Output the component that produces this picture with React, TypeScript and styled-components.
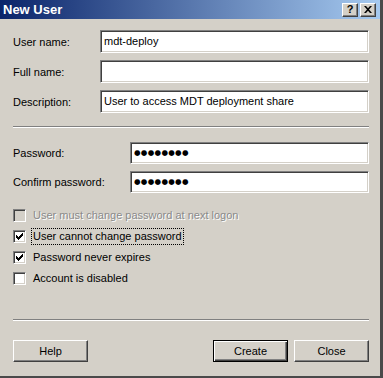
import React from 'react';
import styled, { createGlobalStyle, css } from 'styled-components';

const GlobalStyle = createGlobalStyle`
  html, body {
    margin: 0;
    padding: 0;
    background: #d4d0c8;
  }
  * {
    box-sizing: border-box;
  }
`;

const sunken = css`
  border: 1px solid;
  border-color: #808080 #ffffff #ffffff #808080;
  box-shadow: inset 1px 1px 0 #404040, inset -1px -1px 0 #d4d0c8;
`;

const raised = css`
  border: 1px solid;
  border-color: #ffffff #404040 #404040 #ffffff;
  box-shadow: inset -1px -1px 0 #808080;
`;

const Window = styled.div`
  width: 383px;
  height: 378px;
  background: #d4d0c8;
  border-right: 3px solid #4a4a4a;
  border-bottom: 2px solid #4a4a4a;
  display: flex;
  flex-direction: column;
  font-family: 'Liberation Sans', Arial, sans-serif;
  font-size: 11px;
  color: #000;
`;

const TitleBar = styled.div`
  height: 19px;
  flex: none;
  display: flex;
  align-items: center;
  padding: 0 4px 0 3px;
  background: linear-gradient(to right, #0a246a, #a6caf0);
`;

const Title = styled.div`
  flex: 1;
  color: #fff;
  font-weight: bold;
  font-size: 13px;
`;

const TitleButton = styled.div`
  ${raised};
  width: 16px;
  height: 14px;
  margin-left: 2px;
  background: #d4d0c8;
  display: flex;
  align-items: center;
  justify-content: center;
  font-weight: bold;
  font-size: 11px;
  line-height: 1;
`;

const Body = styled.div`
  flex: 1;
  display: flex;
  flex-direction: column;
  padding: 11px 11px 0 13px;
`;

const FieldRow = styled.div<{ $height: number; $gap: number }>`
  display: flex;
  align-items: center;
  height: ${(p) => p.$height}px;
  margin-bottom: ${(p) => p.$gap}px;
`;

const Label = styled.label<{ $width: number }>`
  width: ${(p) => p.$width}px;
  flex: none;
`;

const TextBox = styled.input<{ $dots?: boolean }>`
  ${sunken};
  flex: 1;
  height: 100%;
  background: #fff;
  padding: 0 0 2px 3px;
  font-family: ${(p) => (p.$dots ? "'DejaVu Sans', sans-serif" : "'Liberation Sans', Arial, sans-serif")};
  font-size: ${(p) => (p.$dots ? '7.5px' : '11px')};
  letter-spacing: ${(p) => (p.$dots ? '0.3px' : '0')};
  color: #000;
  outline: none;
`;

const Separator = styled.div<{ $top: number; $bottom: number }>`
  height: 2px;
  flex: none;
  border-top: 1px solid #808080;
  border-bottom: 1px solid #ffffff;
  margin: ${(p) => p.$top}px 0 ${(p) => p.$bottom}px 0;
`;

const CheckList = styled.div`
  display: flex;
  flex-direction: column;
`;

const CheckRow = styled.div<{ $disabled?: boolean }>`
  height: 21px;
  display: flex;
  align-items: center;
  color: ${(p) => (p.$disabled ? '#8a8a8a' : '#000')};
  text-shadow: ${(p) => (p.$disabled ? '1px 1px 0 #ffffff' : 'none')};
`;

const Box = styled.div<{ $disabled?: boolean }>`
  ${sunken};
  width: 13px;
  height: 13px;
  flex: none;
  margin-right: 6px;
  background: ${(p) => (p.$disabled ? '#d4d0c8' : '#fff')};
  display: flex;
  align-items: center;
  justify-content: center;
`;

const CheckText = styled.span<{ $focused?: boolean }>`
  padding: 0 1px;
  margin-left: -1px;
  border: 1px ${(p) => (p.$focused ? 'dotted #000' : 'solid transparent')};
  line-height: 15px;
`;

const ButtonRow = styled.div`
  display: flex;
  gap: 6px;
`;

const Spacer = styled.div`
  flex: 1;
`;

const Button = styled.button<{ $default?: boolean }>`
  width: 75px;
  height: 22px;
  padding: 0;
  background: #d4d0c8;
  font-family: 'Liberation Sans', Arial, sans-serif;
  font-size: 11px;
  color: #000;
  ${raised};
  ${(p) =>
    p.$default &&
    css`
      border: 1px solid #000;
      box-shadow: inset 1px 1px 0 #ffffff, inset -1px -1px 0 #404040,
        inset -2px -2px 0 #808080;
    `}
`;

const CheckMark = () => (
  <svg width="7" height="7" viewBox="0 0 7 7">
    <path
      d="M0 2h1v1h1v1h1v-1h1v-1h1v-1h1v-1h1v3h-1v1h-1v1h-1v1h-1v1h-1v-1h-1v-1h-1z"
      fill="#000"
    />
  </svg>
);

const CloseGlyph = () => (
  <svg width="8" height="7" viewBox="0 0 8 7">
    <path d="M0 0h2l2 2.3 2-2.3h2l-3 3.5 3 3.5h-2l-2-2.3-2 2.3h-2l3-3.5z" fill="#000" />
  </svg>
);

const options = [
  { label: 'User must change password at next logon', checked: false, disabled: true },
  { label: 'User cannot change password', checked: true, focused: true },
  { label: 'Password never expires', checked: true },
  { label: 'Account is disabled', checked: false },
];

export default function App() {
  return (
    <>
      <GlobalStyle />
      <Window>
        <TitleBar>
          <Title>New User</Title>
          <TitleButton>?</TitleButton>
          <TitleButton>
            <CloseGlyph />
          </TitleButton>
        </TitleBar>
        <Body>
          <FieldRow $height={23} $gap={7}>
            <Label $width={87}>User name:</Label>
            <TextBox readOnly defaultValue="mdt-deploy" />
          </FieldRow>
          <FieldRow $height={23} $gap={7}>
            <Label $width={87}>Full name:</Label>
            <TextBox readOnly defaultValue="" />
          </FieldRow>
          <FieldRow $height={23} $gap={0}>
            <Label $width={87}>Description:</Label>
            <TextBox readOnly defaultValue="User to access MDT deployment share" />
          </FieldRow>

          <Separator $top={13} $bottom={14} />

          <FieldRow $height={22} $gap={7}>
            <Label $width={117}>Password:</Label>
            <TextBox $dots readOnly defaultValue="●●●●●●●●" />
          </FieldRow>
          <FieldRow $height={22} $gap={12}>
            <Label $width={117}>Confirm password:</Label>
            <TextBox $dots readOnly defaultValue="●●●●●●●●" />
          </FieldRow>

          <CheckList>
            {options.map((o) => (
              <CheckRow key={o.label} $disabled={o.disabled}>
                <Box $disabled={o.disabled}>{o.checked && <CheckMark />}</Box>
                <CheckText $focused={o.focused}>{o.label}</CheckText>
              </CheckRow>
            ))}
          </CheckList>

          <Separator $top={30} $bottom={19} />

          <ButtonRow>
            <Button>Help</Button>
            <Spacer />
            <Button $default>Create</Button>
            <Button>Close</Button>
          </ButtonRow>
        </Body>
      </Window>
    </>
  );
}
